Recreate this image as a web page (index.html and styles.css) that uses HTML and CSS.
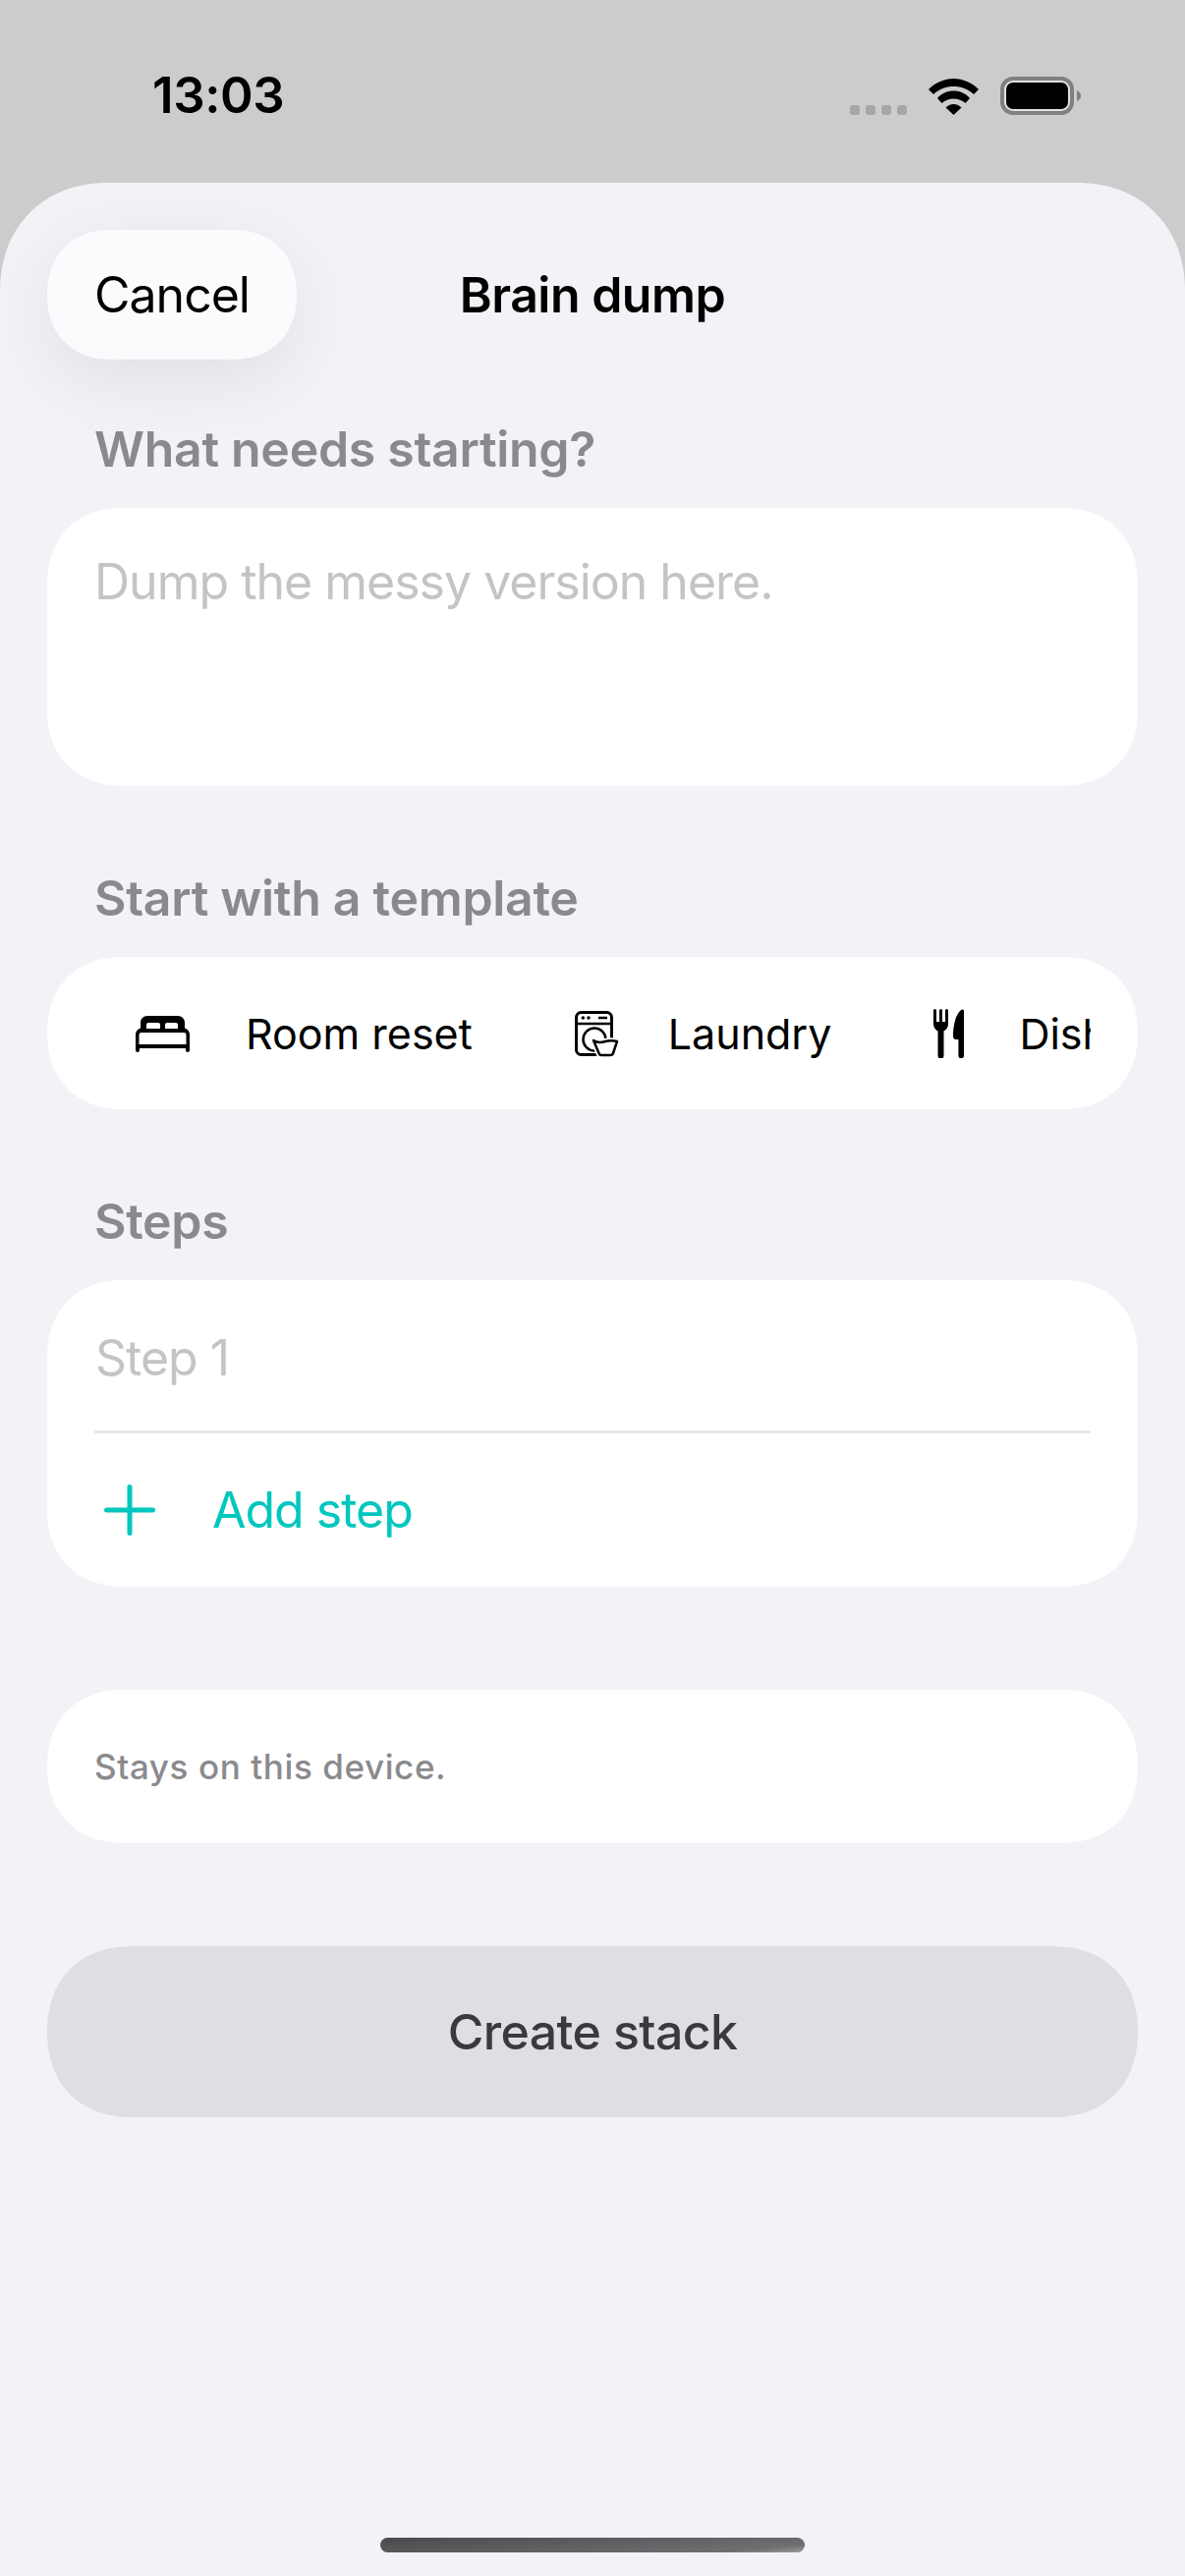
FILE: index.html
```html
<!DOCTYPE html>
<html lang="en">
<head>
    <meta charset="UTF-8">
    <meta name="viewport" content="width=device-width, initial-scale=1.0">
    <title>Brain dump</title>
    <link rel="stylesheet" href="styles.css">
</head>
<body>

<div class="status-bar">
    <span class="time">13:03</span>
    <div class="status-icons">
        <svg width="58" height="10" viewBox="0 0 58 10" fill="#a6a6a6">
            <rect width="10" height="10" rx="3"/>
            <rect x="16" width="10" height="10" rx="3"/>
            <rect x="32" width="10" height="10" rx="3"/>
            <rect x="48" width="10" height="10" rx="3"/>
        </svg>
        <svg width="51" height="37" viewBox="0 0 51 37">
            <path d="M0 11C7 4 16 0 25.5 0C35 0 44 4 51 11L46 16C40 10.500 33 8 25.500 8C18 8 11 10.500 5 16Z"/>
            <path d="M9 20C13 15 19 12.500 25.500 12.500C32 12.500 38 15 42 20L37.500 25C34 22 30 20.500 25.500 20.500C21 20.500 17 22 13.500 25Z"/>
            <path d="M17.500 29.500C20 27 23 26 25.500 26C28 26 31 27 33.500 29.500L25.500 37Z"/>
        </svg>
        <svg width="82" height="39" viewBox="0 0 82 39">
            <rect x="2" y="2" width="71" height="35" rx="11" fill="#e2e2e2" stroke="#808080" stroke-width="4"/>
            <rect x="6" y="6" width="63" height="27" rx="7"/>
            <path d="M78 14C80.500 15 82 17 82 19.500C82 22 80.500 24 78 25Z" fill="#808080"/>
        </svg>
    </div>
</div>

<div class="sheet">
    <div class="nav">
        <button class="cancel-btn">Cancel</button>
        <div class="nav-title">Brain dump</div>
    </div>

    <div class="section-label first">What needs starting?</div>
    <div class="card dump-field">
        <div class="placeholder">Dump the messy version here.</div>
    </div>

    <div class="section-label">Start with a template</div>
    <div class="card templates">
        <div class="template-row">
            <div class="template">
                <svg width="56" height="37" viewBox="0 0 56 37">
                    <path fill-rule="evenodd" d="M12 0H43C47 0 50 3 50 7V12.500C53 13.500 55 16 55 19V35a2 2 0 0 1-4 0V33H4V35a2 2 0 0 1-4 0V19C0 16 2 13.500 5 12.500V7C5 3 8 0 12 0ZM11 13V9a2 2 0 0 1 2-2H23a2 2 0 0 1 2 2V13ZM30 13V9a2 2 0 0 1 2-2H41a2 2 0 0 1 2 2V13ZM6 17H49a2.500 2.500 0 0 1 2.500 2.500V29H3.500V19.500A2.500 2.500 0 0 1 6 17Z"/>
                </svg>
                <span>Room reset</span>
            </div>
            <div class="template tight">
                <svg width="45" height="47" viewBox="0 0 45 47" fill="none" stroke="#000">
                    <rect x="1.500" y="1.500" width="36" height="43" rx="5" stroke-width="3"/>
                    <path d="M1.500 13H37.500" stroke-width="2.500"/>
                    <circle cx="8.300" cy="7" r="1.800" fill="#000" stroke="none"/>
                    <circle cx="14" cy="7" r="1.800" fill="#000" stroke="none"/>
                    <path d="M24 7H33" stroke-width="2.500"/>
                    <circle cx="20" cy="29" r="11.500" stroke-width="2.500"/>
                    <path d="M19 30C22 32 25 33 31 31C35 30 39 30 43 31L39 43Q38.500 45 36 45H27Q25 45 24.500 43Z" stroke="#fff" stroke-width="6" fill="#fff"/>
                    <path d="M19 30C22 32 25 33 31 31C35 30 39 30 43 31L39 43Q38.500 45 36 45H27Q25 45 24.500 43Z" stroke-width="2.500" stroke-linejoin="round"/>
                </svg>
                <span>Laundry</span>
            </div>
            <div class="template">
                <svg width="31" height="50" viewBox="0 0 31 50">
                    <path d="M1.500 1.500V14M7.500 1.500V14M13.500 1.500V14" stroke="#000" stroke-width="3" stroke-linecap="round"/>
                    <path d="M0 13H15V15C15 19 12.500 21.500 10.500 22.500V47.500a3 3 0 0 1-6 0V22.500C2.500 21.500 0 19 0 15Z"/>
                    <path d="M31 2V47.500a2.800 2.800 0 0 1-5.600 0V31H23C21 31 20 29.500 20 28C20 18 22 6 28 1C29.500 0 31 0.500 31 2Z"/>
                </svg>
                <span>Dishes</span>
            </div>
        </div>
    </div>

    <div class="section-label">Steps</div>
    <div class="card steps">
        <div class="step-row">
            <div class="placeholder">Step 1</div>
        </div>
        <div class="add-step">
            <svg width="52" height="52" viewBox="0 0 52 52" fill="none" stroke="#00c7be" stroke-width="5" stroke-linecap="round">
                <path d="M26 2.500V49.500M2.500 26H49.500"/>
            </svg>
            <span>Add step</span>
        </div>
    </div>

    <div class="card note">Stays on this device.</div>

    <button class="create-btn">Create stack</button>

    <div class="home-bar"></div>
</div>

</body>
</html>
```

FILE: styles.css
```css
* {
    box-sizing: border-box;
}
body {
    margin: 0;
    height: 2622px;
    background: #cccccc;
    font-family: Inter, "Noto Sans", sans-serif;
    color: #000;
    display: flex;
    flex-direction: column;
    overflow: hidden;
}
.status-bar {
    height: 186px;
    flex: none;
    padding: 67px 106px 0 155px;
    display: flex;
    justify-content: space-between;
    align-items: flex-start;
}
.time {
    font-size: 51px;
    line-height: 60px;
    font-weight: 600;
    letter-spacing: -0.4px;
}
.status-icons {
    display: flex;
    align-items: flex-end;
    gap: 22px;
    margin-top: 11px;
}
.sheet {
    flex: 1;
    background: #f2f2f7;
    border-radius: 110px 110px 0 0;
    corner-shape: superellipse(1.1);
    padding: 48px 48px 24px;
    display: flex;
    flex-direction: column;
    overflow: hidden;
}
.nav {
    position: relative;
    height: 132px;
    display: flex;
    align-items: center;
}
.cancel-btn {
    width: 254px;
    height: 132px;
    border: 0;
    border-radius: 66px;
    corner-shape: superellipse(1.15);
    background: #fbfbfe;
    box-shadow: 0 20px 80px rgba(0, 0, 0, 0.08);
    font: 400 50px Inter, sans-serif;
    letter-spacing: -1px;
    color: #000;
    padding: 0;
}
.nav-title {
    position: absolute;
    left: 0;
    right: 0;
    text-align: center;
    font-size: 50px;
    font-weight: 600;
    letter-spacing: -0.5px;
}
.section-label {
    font-size: 50px;
    line-height: 60px;
    font-weight: 600;
    color: #8a8a8e;
    letter-spacing: -0.3px;
    padding-left: 48px;
    margin-top: 84px;
    margin-bottom: 30px;
}
.section-label.first {
    margin-top: 61px;
}
.card {
    background: #fff;
    border-radius: 78px;
    corner-shape: superellipse(1.15);
}
.placeholder {
    font-size: 50px;
    line-height: 60px;
    color: #c4c4c6;
    letter-spacing: -1px;
}
.dump-field {
    height: 283px;
    padding: 45px 48px;
}
.templates {
    height: 155px;
    padding: 0 48px;
    display: flex;
}
.template-row {
    flex: 1;
    overflow: hidden;
    display: flex;
    align-items: center;
    gap: 104px;
    padding: 1px 0 0 42px;
}
.template {
    flex: none;
    display: flex;
    align-items: center;
    gap: 56px;
    font-size: 43px;
}
.template.tight {
    gap: 50px;
}
.steps {
    height: 312px;
    padding: 0 48px;
}
.step-row {
    height: 156px;
    padding: 49px 0 0 1px;
    border-bottom: 3px solid #e8e8ea;
}
.add-step {
    height: 156px;
    display: flex;
    align-items: center;
    gap: 58px;
    padding-left: 10px;
    font-size: 50px;
    letter-spacing: -1px;
    color: #00c7be;
}
.note {
    height: 156px;
    margin-top: 105px;
    padding: 0 48px;
    display: flex;
    align-items: center;
    font-size: 35px;
    font-weight: 500;
    letter-spacing: 0.6px;
    color: #8a8a8e;
}
.create-btn {
    height: 174px;
    flex: none;
    margin-top: 105px;
    border: 0;
    border-radius: 87px;
    corner-shape: superellipse(1.15);
    background: #dedee4;
    font: 500 50px Inter, sans-serif;
    letter-spacing: -0.6px;
    color: #3a3a3c;
}
.home-bar {
    width: 432px;
    height: 15px;
    margin-top: auto;
    align-self: center;
    border-radius: 8px;
    background: linear-gradient(175deg, #4b4b4d 0%, #6f6f72 85%, #9a9a9c 100%);
}
```
